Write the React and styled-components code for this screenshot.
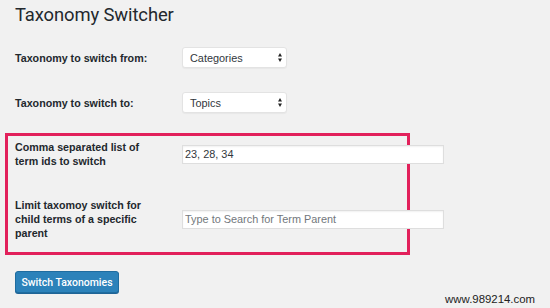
import React from "react";
import styled, { createGlobalStyle } from "styled-components";

const GlobalStyle = createGlobalStyle`
  html, body { margin: 0; padding: 0; background: #f1f1f1; }
  body { font-family: "Liberation Sans", Arial, sans-serif; }
  * { box-sizing: border-box; }
`;

const Page = styled.div`
  position: relative;
  width: 550px;
  height: 308px;
  padding-left: 15px;
  overflow: hidden;
  background: #f1f1f1;
  color: #23282d;
`;

const Title = styled.h1`
  margin: 0;
  height: 35px;
  padding-top: 3px;
  font-family: Roboto, "Liberation Sans", Arial, sans-serif;
  font-size: 18.4px;
  letter-spacing: -0.1px;
  line-height: 24px;
  font-weight: 400;
  color: #23282d;
`;

const FormRow = styled.div`
  display: grid;
  grid-template-columns: 167px auto;
  align-items: center;
  height: ${(p) => p.$h}px;
`;

const Label = styled.label`
  display: block;
  max-width: 140px;
  font-size: 10.7px;
  line-height: 14px;
  font-weight: 700;
  color: #23282d;
`;

const SelectBox = styled.div`
  width: 105px;
  height: 21px;
  display: flex;
  align-items: center;
  justify-content: space-between;
  padding: 0 4px 0 7px;
  background: #fff;
  border: 1px solid #e3e3e3;
  border-radius: 3px;
  box-shadow: 0 1px 1px rgba(0, 0, 0, 0.04);
  font-size: 10.9px;
  color: #32373c;
`;

const TextInput = styled.input`
  width: 262px;
  height: 19px;
  margin: 0;
  padding: 0 2px;
  background: #fff;
  border: 1px solid #dedede;
  border-radius: 0;
  box-shadow: inset 0 1px 2px rgba(0, 0, 0, 0.06);
  font-family: "Liberation Sans", Arial, sans-serif;
  font-size: 10.9px;
  color: #32373c;
  outline: none;
  &::placeholder { color: #72777c; opacity: 1; }
`;

const Highlight = styled.div`
  width: 405px;
  margin-top: 8px;
  margin-left: -10px;
  padding-left: 7px;
  border: 3px solid #e2215b;
  display: flex;
  flex-direction: column;
  gap: 14px;
`;

const PrimaryButton = styled.button`
  display: block;
  margin-top: 16px;
  width: 104px;
  height: 22px;
  padding: 0;
  background: #2c82ba;
  border: 1px solid #1f6c9f;
  border-radius: 3px;
  box-shadow: 0 1px 0 #1f6496;
  color: #fff;
  font-family: Roboto, "Liberation Sans", Arial, sans-serif;
  font-weight: 500;
  font-size: 10.5px;
  cursor: pointer;
`;

const Watermark = styled.div`
  position: absolute;
  right: 15px;
  bottom: 3px;
  font-size: 11.4px;
  color: #222;
`;

const Arrows = () => (
  <svg width="4" height="9" viewBox="0 0 4 9" aria-hidden="true">
    <path d="M2 0 L4 3.5 L0 3.5 Z" fill="#222" />
    <path d="M2 9 L4 5.5 L0 5.5 Z" fill="#222" />
  </svg>
);

const Select = ({ value }) => (
  <SelectBox role="combobox">
    <span>{value}</span>
    <Arrows />
  </SelectBox>
);

export default function App() {
  return (
    <Page>
      <GlobalStyle />
      <Title>Taxonomy Switcher</Title>
      <FormRow $h={45}>
        <Label>Taxonomy to switch from:</Label>
        <Select value="Categories" />
      </FormRow>
      <FormRow $h={45}>
        <Label>Taxonomy to switch to:</Label>
        <Select value="Topics" />
      </FormRow>
      <Highlight>
        <FormRow $h={36}>
          <Label>Comma separated list of term ids to switch</Label>
          <TextInput defaultValue="23, 28, 34" />
        </FormRow>
        <FormRow $h={66}>
          <Label>Limit taxomoy switch for child terms of a specific parent</Label>
          <TextInput placeholder="Type to Search for Term Parent" />
        </FormRow>
      </Highlight>
      <PrimaryButton>Switch Taxonomies</PrimaryButton>
      <Watermark>www.989214.com</Watermark>
    </Page>
  );
}
